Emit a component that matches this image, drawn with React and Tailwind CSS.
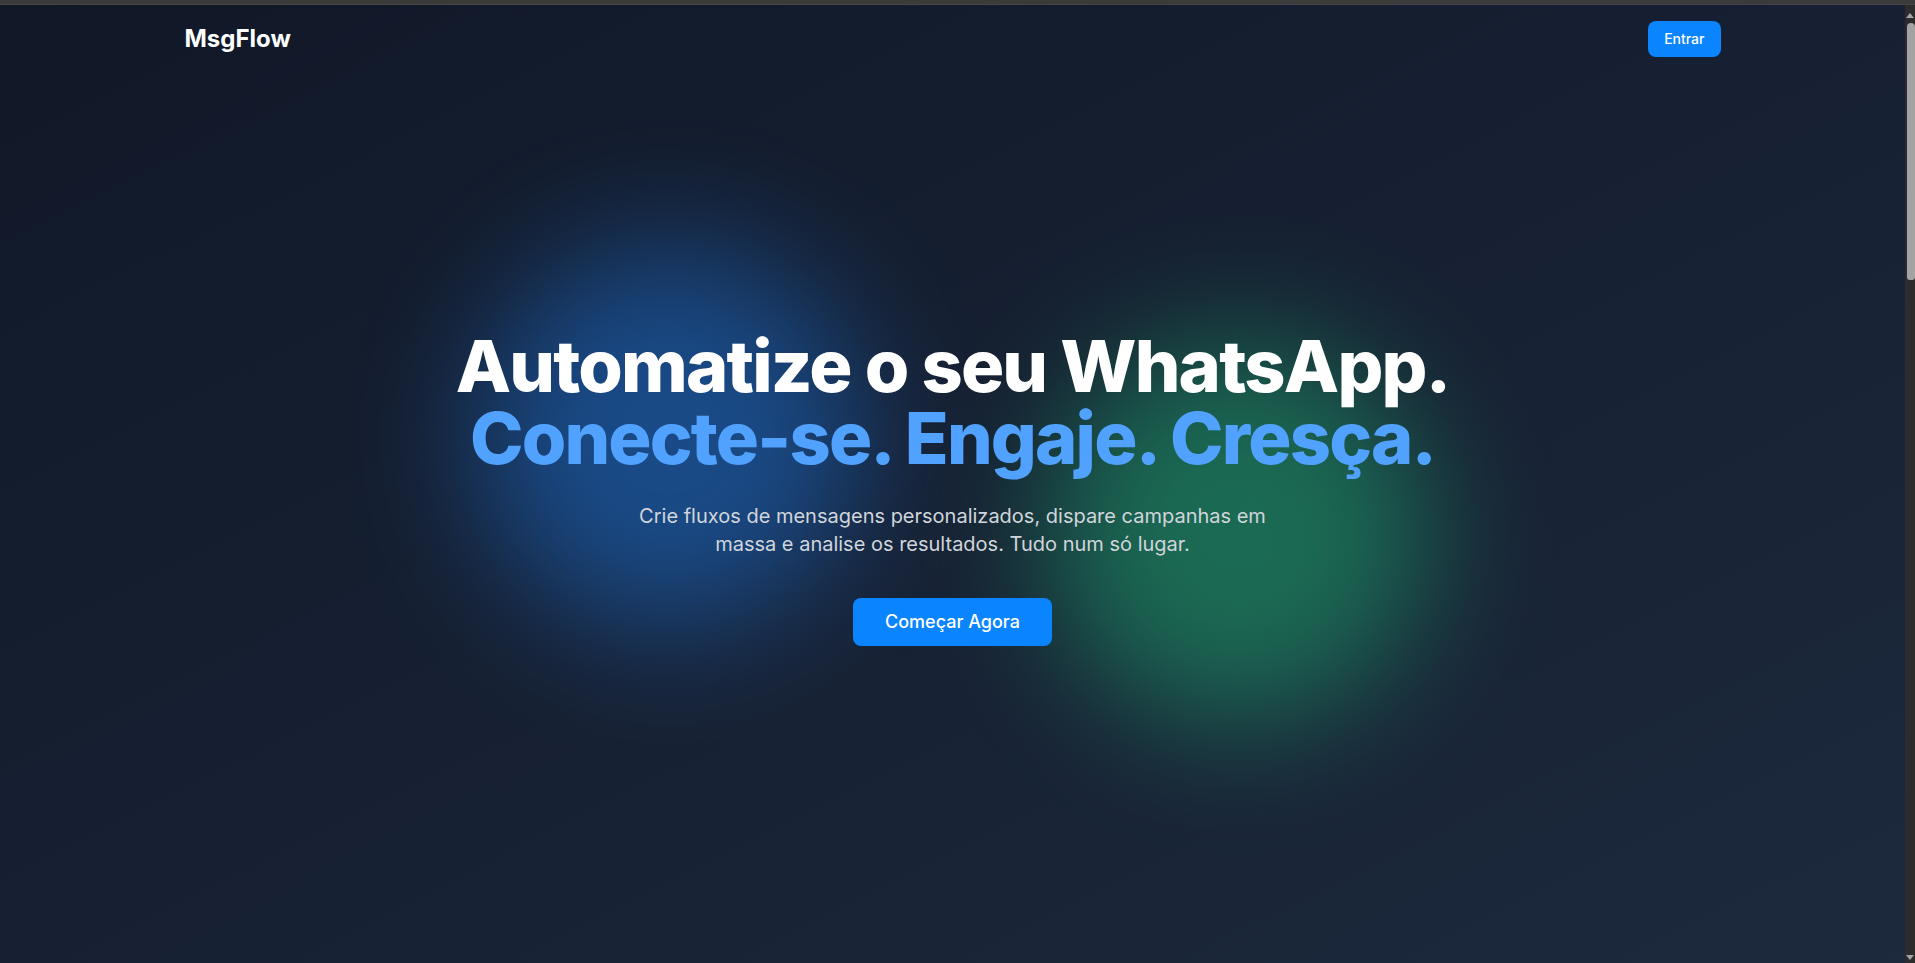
import React from "react";

function ScrollBar() {
  return (
    <div className="w-[10px] shrink-0 bg-[#2c2c2c] flex flex-col items-stretch">
      <div className="h-[18px] flex items-center justify-end pr-[1px] pt-[2px]">
        <svg width="8" height="5" viewBox="0 0 8 5">
          <polygon points="4,0 8,5 0,5" fill="#a3a3a3" />
        </svg>
      </div>
      <div className="h-[257px] ml-[2px] rounded-t-[5px] rounded-b-[3px] bg-[#a3a3a3]" />
      <div className="flex-1" />
      <div className="h-[8px] flex items-start justify-end pr-[1px]">
        <svg width="8" height="5" viewBox="0 0 8 5">
          <polygon points="0,0 8,0 4,5" fill="#a3a3a3" />
        </svg>
      </div>
    </div>
  );
}

export default function App() {
  return (
    <div className="h-screen flex flex-col bg-[#2c2c2c]" style={{ fontFamily: "Inter, 'Noto Sans', sans-serif" }}>
      <div className="h-[5px] shrink-0 bg-[#3b3b3b] border-b border-[#444]" />
      <div className="flex-1 min-h-0 flex">
        <section className="relative flex-1 overflow-hidden bg-linear-to-br from-gray-900 to-slate-800">
          <div className="absolute top-1/4 left-1/4 w-96 h-96 rounded-full bg-[#1f80f0] opacity-45 blur-3xl" />
          <div className="absolute bottom-1/4 right-1/4 w-96 h-96 rounded-full bg-[#1fc27a] opacity-45 blur-3xl" />

          <nav className="absolute top-0 inset-x-0 z-10">
            <div className="container mx-auto flex items-center justify-between py-4">
              <span className="text-2xl font-bold text-white">MsgFlow</span>
              <button className="px-4 py-2 text-sm font-medium text-white bg-[#0a84ff] rounded-lg">Entrar</button>
            </div>
          </nav>

          <div className="relative z-10 h-full flex flex-col items-center justify-center text-center pt-[7px]">
            <h1 className="text-7xl font-extrabold tracking-tight text-white">
              Automatize o seu WhatsApp.
              <span className="block text-blue-400">Conecte-se. Engaje. Cresça.</span>
            </h1>
            <p className="mt-7 max-w-2xl text-xl text-gray-300">
              Crie fluxos de mensagens personalizados, dispare campanhas em massa e analise os resultados. Tudo num só lugar.
            </p>
            <button className="mt-10 px-8 py-2.5 text-lg font-medium text-white bg-[#0a84ff] rounded-lg">Começar Agora</button>
          </div>
        </section>
        <ScrollBar />
      </div>
    </div>
  );
}
